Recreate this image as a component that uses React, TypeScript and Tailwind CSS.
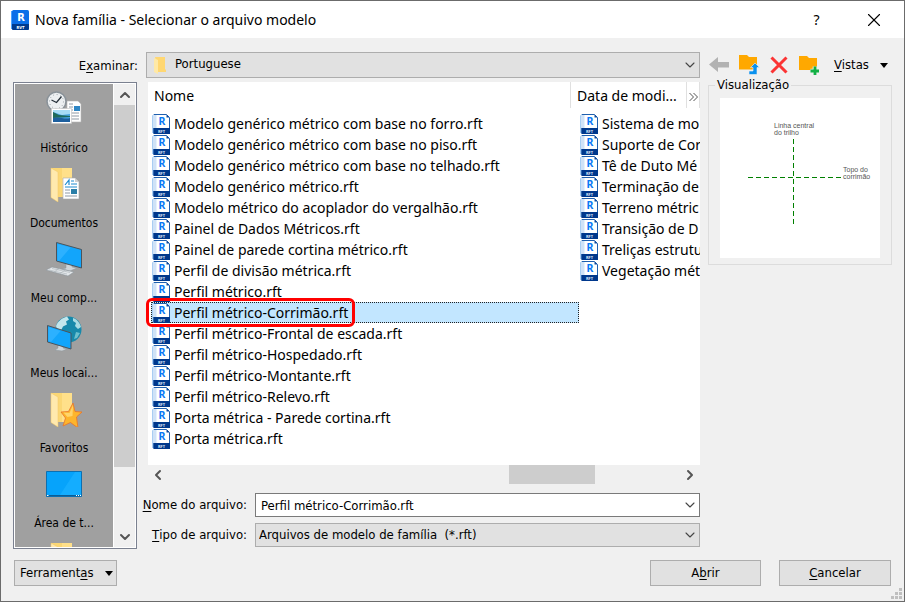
import type { ReactNode } from "react";
import { ChevronDown, ChevronLeft, ChevronRight, ChevronUp, X } from "lucide-react";

// File picker for choosing a family template: places bar on the left, the template
// list with file name / type fields in the middle, toolbar and preview on the right.

const TEMPLATES = [
  "Modelo genérico métrico com base no forro.rft",
  "Modelo genérico métrico com base no piso.rft",
  "Modelo genérico métrico com base no telhado.rft",
  "Modelo genérico métrico.rft",
  "Modelo métrico do acoplador do vergalhão.rft",
  "Painel de Dados Métricos.rft",
  "Painel de parede cortina métrico.rft",
  "Perfil de divisão métrica.rft",
  "Perfil métrico.rft",
  "Perfil métrico-Corrimão.rft",
  "Perfil métrico-Frontal de escada.rft",
  "Perfil métrico-Hospedado.rft",
  "Perfil métrico-Montante.rft",
  "Perfil métrico-Relevo.rft",
  "Porta métrica - Parede cortina.rft",
  "Porta métrica.rft",
];

const MORE_TEMPLATES = [
  "Sistema de mo",
  "Suporte de Cor",
  "Tê de Duto Mé",
  "Terminação de",
  "Terreno métric",
  "Transição de D",
  "Treliças estrutu",
  "Vegetação mét",
];

const SELECTED = "Perfil métrico-Corrimão.rft";

function AppIcon() {
  return (
    <svg width="18" height="20" viewBox="0 0 18 20" aria-hidden="true">
      <path d="M0 1h3v18H0z" fill="#4aa3ff" />
      <rect x="1" width="17" height="20" rx="1.5" fill="#0b6fe8" />
      <path d="M1 14h17v4.500a1.500 1.500 0 0 1-1.500 1.500h-14A1.500 1.500 0 0 1 1 18.500z" fill="#003a8c" />
      <text x="10" y="11" textAnchor="middle" fontSize="11" fontWeight="700" fill="#fff">R</text>
      <text x="9.500" y="18.500" textAnchor="middle" fontSize="4" fontWeight="700" fill="#fff">RVT</text>
    </svg>
  );
}

function TemplateIcon() {
  return (
    <svg className="shrink-0" width="18" height="20" viewBox="0 0 18 20" aria-hidden="true">
      <path d="M0 1.500 2 .5V19H0z" fill="#a9cdf2" />
      <path d="M2 .5h12.500L17.500 3.500V19.500H2z" fill="#fff" stroke="#1f5fae" />
      <path d="M1 1v13h3.500V1z" fill="#cfe2f7" />
      <path d="M14.500 .5v3h3z" fill="#0b4a9e" />
      <path d="M1.500 14H18v6H1.500z" fill="#00388c" />
      <text x="10" y="11" textAnchor="middle" fontSize="10.500" fontWeight="700" fill="#0a78f5">R</text>
      <text x="9.500" y="18.700" textAnchor="middle" fontSize="4" fontWeight="700" fill="#dce8f8">RFT</text>
    </svg>
  );
}

function SmallFolder() {
  return (
    <svg width="13" height="17" viewBox="0 0 13 17" aria-hidden="true">
      <path d="M1 0h10v12l1 1v2H4z" fill="#ffd772" />
      <path d="M0 1l4 2v14l-4-2z" fill="#ffe9a6" />
    </svg>
  );
}

function FolderBody() {
  return (
    <>
      <path d="M5 2h21v26l-2 3H12z" fill="#fbd775" />
      <path d="M16 2h10v26l-2 3h-8z" fill="#ffe08a" />
      <path d="M5 2l7 4v30l-7-4.500z" fill="#ffe9ae" stroke="#f0c766" strokeWidth=".5" />
    </>
  );
}

function HistoryIcon() {
  return (
    <svg width="36" height="36" viewBox="0 0 36 36" aria-hidden="true">
      <path d="M21 10h11l3 3v18H21z" fill="#fff" stroke="#b5b5b5" strokeWidth=".6" />
      <path d="M28 15h6v5h-6z" fill="#2f86c4" />
      <path d="M23 13h4M23 16h4M23 19h4M23 22h10M23 25h10M23 28h10" stroke="#8e99a5" />
      <circle cx="10.500" cy="10.500" r="9.500" fill="#eceff1" stroke="#8a9299" strokeWidth="1.600" />
      <circle cx="10.500" cy="10.500" r="7" fill="none" stroke="#9aa2a8" strokeWidth="1" strokeDasharray="1 2.660" />
      <path d="M5.500 9l5 2.500L15.500 5.500" fill="none" stroke="#26303a" strokeWidth="1.300" />
      <path d="M5.500 17.500h20v15h-20z" fill="#fff" stroke="#c4c4c4" strokeWidth=".6" />
      <path d="M7 19h17v12H7z" fill="#4aa5e3" />
      <path d="M7 19h17v4l-8 1-9-3z" fill="#a8dcf6" />
      <path d="M7 21l6 3 11 1v1l-17 1z" fill="#1f6a5b" />
      <path d="M7 27c6-2 12 2 17 0v4H7z" fill="#1d5f9e" />
    </svg>
  );
}

function DocumentsIcon() {
  return (
    <svg width="36" height="36" viewBox="0 0 36 36" aria-hidden="true">
      <FolderBody />
      <path d="M17 12h12l4 4v17H17z" fill="#fff" stroke="#a9a9a9" strokeWidth=".6" />
      <path d="M29 12v4h4z" fill="#d0d0d0" />
      <path d="M19 19l4-5v5M25 15h3M25 18h6M19 21h12" fill="none" stroke="#1e8bd0" strokeWidth="1.200" />
      <path d="M25 23h6v5h-6z" fill="#2b7fa8" />
      <path d="M19 24h5M19 27h5M19 30h12" stroke="#8e99a5" />
    </svg>
  );
}

function ComputerIcon() {
  return (
    <svg width="36" height="36" viewBox="0 0 36 36" aria-hidden="true">
      <path d="M20 23l6 1v2l5 1-7 3-8-2 4-1z" fill="#cfd5d9" stroke="#8d969c" strokeWidth=".5" />
      <path d="M10.500 1.500l25 7V27l-25-7z" fill="#12a5fb" stroke="#4c545b" />
      <path d="M11.500 3l13 3.500L13 20l-1.500-.5z" fill="#2cb1ff" />
      <path d="M0 29l6-3 22 5-6 4z" fill="#e3e7ea" stroke="#8d969c" strokeWidth=".6" />
      <path d="M3 29l18 4M6 27.500l18 4M8 31l6-4M14 32.500l6-4" stroke="#a8b0b6" strokeWidth=".6" />
    </svg>
  );
}

function NetworkIcon() {
  return (
    <svg width="36" height="36" viewBox="0 0 36 36" aria-hidden="true">
      <circle cx="22.500" cy="13.500" r="13" fill="#1789ab" />
      <path d="M10 10c2-5 6-8 11-9.500l2 3-3 2 1 3-4 2-2 4-4-1z" fill="#c3e6ec" />
      <path d="M27 2c4 1 7 5 8 9l-3 2-3-3 1-3-3-2z" fill="#a9dbe4" />
      <path d="M30 16l4 1-3 5-3 1z" fill="#6cc0cf" />
      <path d="M12 29l5 1v2l4 1-5 2-7-1 3-2z" fill="#cfd5d9" stroke="#8d969c" strokeWidth=".5" />
      <path d="M1.500 9.500L25 17v16L1.500 26z" fill="#12a5fb" stroke="#4c545b" />
      <path d="M2.500 11l12 4L5 26l-2.500-1z" fill="#2cb1ff" />
    </svg>
  );
}

function FavoritesIcon() {
  return (
    <svg width="36" height="36" viewBox="0 0 36 36" aria-hidden="true">
      <FolderBody />
      <path
        d="M27 12l2 8.500 7 .5-5.500 5L32 37l-7.500-5.500L17 35l2.500-8-4.500-6 7.500-.5z"
        fill="#fdb52c"
        stroke="#e9742b"
        strokeWidth=".8"
      />
      <path d="M27 14l-3.500 8-6-.500 4 4.500 5-1z" fill="#ffd56b" />
    </svg>
  );
}

function DesktopIcon() {
  return (
    <svg width="36" height="36" viewBox="0 0 36 36" aria-hidden="true">
      <path d="M.5 5.500h35v25H.5z" fill="#06a3fb" stroke="#0d6fb0" />
      <path d="M29 6h6v23H14z" fill="#14adff" />
      <path d="M1 29.500h34" stroke="#0b5d96" />
      <path d="M1 29.500h1.500M30 29.500h1M32 29.500h1M34 29.500h1" stroke="#fff" />
    </svg>
  );
}

function FolderIcon() {
  return (
    <svg width="36" height="36" viewBox="0 0 36 36" aria-hidden="true">
      <FolderBody />
    </svg>
  );
}

const PLACES = [
  { label: "Histórico", icon: <HistoryIcon /> },
  { label: "Documentos", icon: <DocumentsIcon /> },
  { label: "Meu comp...", icon: <ComputerIcon /> },
  { label: "Meus locai...", icon: <NetworkIcon /> },
  { label: "Favoritos", icon: <FavoritesIcon /> },
  { label: "Área de t...", icon: <DesktopIcon /> },
  { label: "", icon: <FolderIcon /> },
];

function Key({ children }: { children: string }) {
  return <span className="underline underline-offset-2">{children}</span>;
}

function Caret() {
  return (
    <svg width="8" height="5" viewBox="0 0 8 5" aria-hidden="true">
      <path d="M0 0h8L4 5z" fill="#000" />
    </svg>
  );
}

function TitleBar() {
  return (
    <header className="flex h-[37px] shrink-0 items-center bg-white pr-[2px] pl-[10px]">
      <AppIcon />
      <h1 className="ml-[6px] flex-1 font-['Noto_Sans',sans-serif] text-[14px]">
        Nova família - Selecionar o arquivo modelo
      </h1>
      <button type="button" aria-label="Ajuda" className="w-[57px] font-['Noto_Sans',sans-serif] text-[14px]">
        ?
      </button>
      <button type="button" aria-label="Fechar" className="flex w-[57px] justify-center">
        <X size={22} strokeWidth={1.2} />
      </button>
    </header>
  );
}

function PlacesBar() {
  return (
    <nav className="flex w-[124px] shrink-0 border border-[#7b8190] bg-white p-px text-[12px]">
      <ul className="min-w-0 flex-1 overflow-hidden bg-[#a0a0a0]">
        {PLACES.map((p, i) => (
          <li key={i}>
            <button type="button" className="flex h-[75px] w-full flex-col items-center gap-3 pt-[7px]">
              {p.icon}
              {p.label && <span className="leading-[18px]">{p.label}</span>}
            </button>
          </li>
        ))}
      </ul>
      <div className="ml-px flex w-[21px] flex-col bg-[#f0f0f0]">
        <button type="button" aria-label="Rolar para cima" className="flex h-[21px] items-center justify-center text-[#555]">
          <ChevronUp size={16} strokeWidth={3} />
        </button>
        <div className="min-h-0 flex-1">
          <div className="h-[86%] bg-[#cdcdcd]" />
        </div>
        <button type="button" aria-label="Rolar para baixo" className="flex h-[21px] items-center justify-center text-[#555]">
          <ChevronDown size={16} strokeWidth={3} />
        </button>
      </div>
    </nav>
  );
}

function TemplateRow({ name }: { name: string }) {
  const selected = name === SELECTED;
  return (
    <li className="relative">
      <button
        type="button"
        className={`flex h-[21px] w-full items-center gap-1 border border-dotted text-left whitespace-nowrap ${selected ? "border-[#222] bg-[#c2e6ff]" : "border-transparent"}`}
      >
        <TemplateIcon />
        {name}
      </button>
      {/* Highlight frame drawn over the neighbouring rows */}
      {selected && (
        <span className="pointer-events-none absolute -top-1 -left-[5px] z-10 h-[29px] w-[209px] rounded-md border-3 border-[#f00]" />
      )}
    </li>
  );
}

function TemplateList() {
  return (
    <div className="ml-[2px] flex min-h-0 flex-1 flex-col font-['Noto_Sans',sans-serif] text-[14px]">
      <div className="flex min-h-0 flex-1 flex-col bg-white">
        <div className="flex h-[26px] shrink-0 items-stretch leading-[28px]">
          <span className="w-[423px] shrink-0 border-r border-[#e0e0e0] pl-[6px]">Nome</span>
          <span className="min-w-0 flex-1 border-r border-[#e0e0e0] pl-[6px] whitespace-nowrap">Data de modi...</span>
          <button
            type="button"
            aria-label="Mais colunas"
            className="flex w-[13px] items-center justify-center border-r border-[#e0e0e0] pt-1"
          >
            <svg width="9" height="10" viewBox="0 0 9 10" aria-hidden="true">
              <path d="M.5 1l4 4-4 4M4.500 1l4 4-4 4" fill="none" stroke="#555" />
            </svg>
          </button>
        </div>
        <div className="grid grid-cols-[428px_1fr] pt-[5px] pl-[3px] [clip-path:inset(0_0_0_-8px)]">
          <ul>
            {TEMPLATES.map((name) => (
              <TemplateRow key={name} name={name} />
            ))}
          </ul>
          <ul className="min-w-0 overflow-hidden">
            {MORE_TEMPLATES.map((name) => (
              <TemplateRow key={name} name={name} />
            ))}
          </ul>
        </div>
      </div>
      <div className="flex h-[19px] shrink-0 items-stretch text-[#555]">
        <button type="button" aria-label="Rolar para a esquerda" className="flex w-5 items-center justify-center">
          <ChevronLeft size={16} strokeWidth={3} />
        </button>
        <div className="flex flex-1">
          <div className="w-2/3" />
          <div className="w-1/6 bg-[#cdcdcd]" />
        </div>
        <button type="button" aria-label="Rolar para a direita" className="flex w-5 items-center justify-center">
          <ChevronRight size={16} strokeWidth={3} />
        </button>
      </div>
    </div>
  );
}

// Wraps a select or text box and draws the drop arrow over its right edge.
function Combo({ children, lead }: { children: ReactNode; lead?: ReactNode }) {
  return (
    <div className="relative min-w-0 flex-1">
      {children}
      {lead && <span className="pointer-events-none absolute inset-y-0 left-2 flex items-center">{lead}</span>}
      <span className="pointer-events-none absolute inset-y-0 right-[2px] flex items-center text-[#444]">
        <ChevronDown size={16} strokeWidth={1.6} />
      </span>
    </div>
  );
}

function Toolbar() {
  return (
    <div className="flex h-[26px] w-[184px] shrink-0 items-center gap-2">
      <button type="button" aria-label="Voltar">
        <svg width="22" height="22" viewBox="0 0 22 22" aria-hidden="true">
          <path d="M1 10.500L10 3v5h11v5.500H10v4.500z" fill="#b2b2b2" />
        </svg>
      </button>
      <button type="button" aria-label="Um nível acima">
        <svg width="22" height="22" viewBox="0 0 22 22" aria-hidden="true">
          <path d="M1 1h8l2 2h8v12.500H1z" fill="#ffa800" />
          <path d="M11 20.500v-3.500h4v-3.500h-2.500l4.500-4.500 4.500 4.500H19v7z" fill="#0a91ee" stroke="#f0f0f0" strokeWidth=".6" />
        </svg>
      </button>
      <button type="button" aria-label="Excluir">
        <svg width="22" height="22" viewBox="0 0 22 22" aria-hidden="true">
          <path d="M3.500 3.500l15 15M18.500 3.500l-15 15" stroke="#fb3434" strokeWidth="3" />
        </svg>
      </button>
      <button type="button" aria-label="Nova pasta">
        <svg width="22" height="22" viewBox="0 0 22 22" aria-hidden="true">
          <path d="M1 2h8l2 2h8v12H1z" fill="#ffa800" />
          <path d="M17 12.500v8.500M12.500 17h8.500" stroke="#f0f0f0" strokeWidth="4.600" />
          <path d="M17 12.500v8.500M12.500 17h8.500" stroke="#12b045" strokeWidth="2.800" />
        </svg>
      </button>
      <button type="button" className="ml-[6px] flex items-center gap-[11px]">
        <span>
          <Key>V</Key>istas
        </span>
        <Caret />
      </button>
    </div>
  );
}

function Preview() {
  return (
    <fieldset className="-mt-1 w-[184px] shrink-0 border border-[#dcdcdc] px-[11px] pt-[6px] pb-[6px]">
      <legend className="-ml-[5px] px-[2px] leading-[14px]">Visualização</legend>
      <svg
        className="block w-full bg-white font-['Liberation_Sans',sans-serif]"
        viewBox="0 0 160 160"
        role="img"
        aria-label="Linha central do trilho e topo do corrimão"
      >
        <path d="M73.500 41v86" stroke="#008000" strokeDasharray="5 3" shapeRendering="crispEdges" />
        <path d="M28 79.500h94" stroke="#008000" strokeDasharray="5 3" shapeRendering="crispEdges" />
        <g fontSize="7" fill="#555">
          <text x="54" y="30">Linha central</text>
          <text x="54" y="37">do trilho</text>
          <text x="123" y="74">Topo do</text>
          <text x="123" y="81">corrimão</text>
        </g>
      </svg>
    </fieldset>
  );
}

function FileFields() {
  return (
    <div className="mt-[9px] mb-[2px] grid shrink-0 grid-cols-[101px_1fr] items-center gap-x-2 gap-y-[6px]">
      <label htmlFor="file-name" className="flex justify-end whitespace-nowrap">
        <Key>N</Key>ome do arquivo:
      </label>
      <Combo>
        <input
          id="file-name"
          type="text"
          defaultValue={SELECTED}
          className="block h-6 w-full border border-[#7a7a7a] bg-white pr-6 pl-[5px]"
        />
      </Combo>
      <label htmlFor="file-type" className="flex justify-end whitespace-nowrap">
        <Key>T</Key>ipo de arquivo:
      </label>
      <Combo>
        <select
          id="file-type"
          className="block h-6 w-full appearance-none border border-[#adadad] bg-[#e1e1e1] pr-6 pl-[3px]"
        >
          <option>Arquivos de modelo de família&nbsp; (*.rft)</option>
        </select>
      </Combo>
    </div>
  );
}

export default function App() {
  return (
    <div className="relative flex h-screen flex-col overflow-hidden border border-[#6b6b6b] bg-[#f0f0f0] font-['DejaVu_Sans_Condensed','DejaVu_Sans',sans-serif] text-[13px] text-black">
      <TitleBar />

      <main className="flex min-h-0 flex-1 flex-col px-3 pt-[14px]">
        <div className="flex shrink-0 gap-2">
          <label htmlFor="look-in" className="w-[125px] pt-1 text-right leading-[20px]">
            E<Key>x</Key>aminar:
          </label>
          <Combo lead={<SmallFolder />}>
            <select
              id="look-in"
              className="block h-[26px] w-full appearance-none border border-[#adadad] bg-[#e1e1e1] pr-6 pb-[2px] pl-7"
            >
              <option>Portuguese</option>
            </select>
          </Combo>
          <Toolbar />
        </div>

        <div className="mt-1 flex min-h-0 flex-1 gap-2">
          <PlacesBar />
          <section className="ml-px flex min-w-0 flex-1 flex-col">
            <TemplateList />
            <FileFields />
          </section>
          <div className="shrink-0">
            <Preview />
          </div>
        </div>

        <div className="mt-[11px] mb-[15px] flex shrink-0 items-center px-px">
          <button
            type="button"
            className="flex h-[26px] w-[103px] items-center justify-between border border-[#adadad] bg-[#e1e1e1] pr-[3px] pl-[5px]"
          >
            <span>
              Ferrament<Key>a</Key>s
            </span>
            <Caret />
          </button>
          <button type="button" className="ml-auto h-[26px] w-[111px] border border-[#adadad] bg-[#e1e1e1]">
            A<Key>b</Key>rir
          </button>
          <button type="button" className="ml-[18px] h-[26px] w-[112px] border border-[#adadad] bg-[#e1e1e1]">
            <Key>C</Key>ancelar
          </button>
        </div>
      </main>

      {/* Resize grip */}
      <svg className="absolute right-px bottom-px" width="12" height="12" viewBox="0 0 12 12" aria-hidden="true">
        <path d="M8 0h3v3H8zM4 4h3v3H4zM8 4h3v3H8zM0 8h3v3H0zM4 8h3v3H4zM8 8h3v3H8z" fill="#bfbfbf" />
      </svg>
    </div>
  );
}
